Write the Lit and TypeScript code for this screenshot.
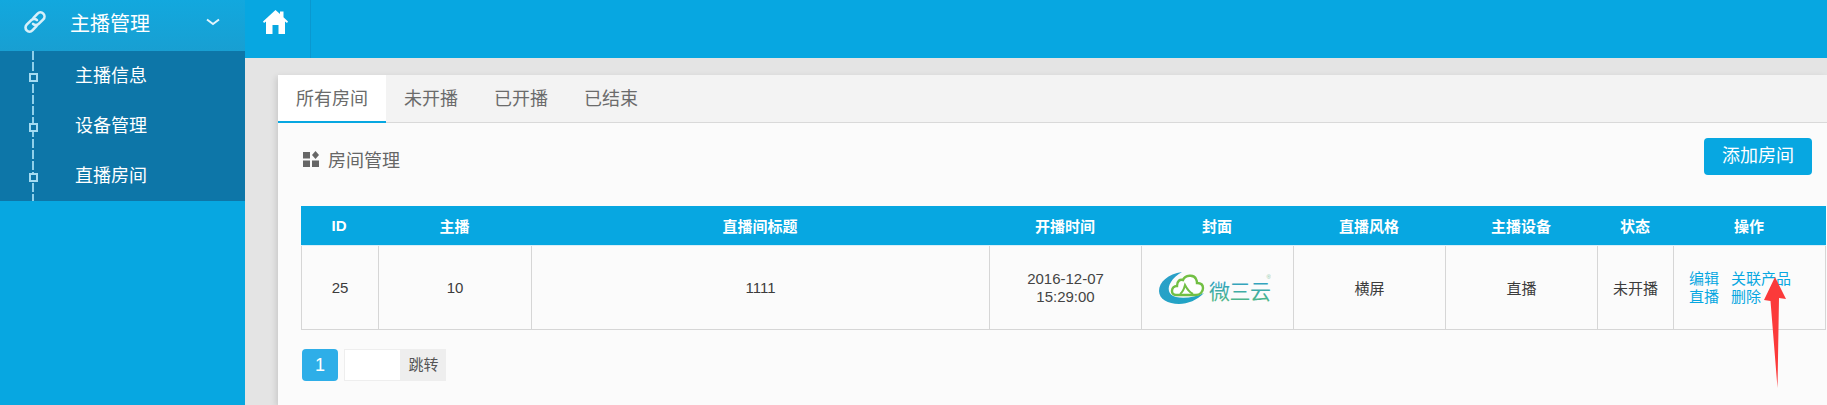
import { LitElement, html, css, svg } from "lit";
import { customElement } from "lit/decorators.js";

const FONT = css`"Liberation Sans", "Noto Sans CJK SC", sans-serif`;

@customElement("app-root")
export class AppRoot extends LitElement {
  static styles = css`
    :host {
      display: block;
      position: relative;
      width: 1827px;
      height: 405px;
      overflow: hidden;
      background: #e4e4e4;
      font-family: ${FONT};
    }
    .layout { display: grid; grid-template-columns: 245px 1fr; height: 405px; }
    .side { background: #07a7e1; }
    .menu-head {
      height: 51px;
      display: flex;
      align-items: center;
      background: linear-gradient(#12a8de, #189fd2);
      color: #fff;
      font-size: 20px;
      box-sizing: border-box;
      padding: 0 0 7px 23px;
    }
    .menu-head .link { width: 24px; height: 24px; margin-right: 23px; }
    .menu-head .chev { width: 14px; height: 8px; margin-left: 56px; }
    .sub { background: #0d76a8; height: 150px; position: relative; }
    .sub::before {
      content: "";
      position: absolute;
      left: 32px;
      top: 0;
      bottom: 0;
      width: 2px;
      background: repeating-linear-gradient(#8fd0ea 0 9px, transparent 9px 11px);
    }
    .sub-item {
      height: 50px;
      display: flex;
      align-items: center;
      padding: 0 0 4px 75px;
      box-sizing: border-box;
      color: #fff;
      font-size: 18px;
      position: relative;
    }
    .sub-item::before {
      content: "";
      position: absolute;
      left: 29px;
      top: 22px;
      width: 5px;
      height: 5px;
      border: 2px solid #a5dcf2;
      background: #0d76a8;
    }
    .top { height: 58px; background: #07a7e1; display: flex; }
    .home {
      width: 66px;
      box-sizing: border-box;
      border-right: 1px solid #0a98cf;
      padding: 10px 0 0 18px;
    }
    .home svg { width: 25px; height: 24px; display: block; }
    .content { padding: 17px 0 0 33px; }
    .card {
      background: #fbfbfb;
      height: 330px;
      box-shadow: -2px 2px 6px rgba(0, 0, 0, 0.12);
    }
    .tabs {
      display: flex;
      height: 48px;
      box-sizing: border-box;
      background: #f3f3f3;
      border-bottom: 1px solid #d9d9d9;
    }
    .tab {
      padding: 0 18px;
      height: 48px;
      box-sizing: border-box;
      line-height: 48px;
      font-size: 18px;
      color: #6b6b6b;
    }
    .tab.on { background: #fff; border-bottom: 2px solid #07a7e1; }
    .body { padding: 15px 1px 0 23px; }
    .head-row { display: flex; justify-content: space-between; height: 68px; padding-right: 14px; }
    .title {
      display: flex;
      align-items: center;
      gap: 9px;
      height: 42px;
      margin-left: 2px;
      font-size: 18px;
      color: #666;
    }
    .title svg { width: 16px; height: 16px; }
    .add {
      width: 108px;
      height: 37px;
      border-radius: 4px;
      background: #07a7e1;
      color: #fff;
      font-size: 18px;
      line-height: 37px;
      text-align: center;
    }
    .grid {
      display: grid;
      grid-template-columns: 78px 153px 458px 152px 152px 152px 152px 76px 152px;
      width: 1525px;
    }
    .th {
      height: 40px;
      background: #07a7e1;
      color: #fff;
      font-weight: 700;
      font-size: 15px;
      display: flex;
      align-items: center;
      justify-content: center;
      border-bottom: 1px solid #d8eef8;
      padding-right: 2px;
      box-sizing: border-box;
    }
    .td {
      height: 84px;
      box-sizing: border-box;
      border-right: 1px solid #d6d6d6;
      border-bottom: 1px solid #d6d6d6;
      display: flex;
      align-items: center;
      justify-content: center;
      text-align: center;
      font-size: 15px;
      color: #3c3c3c;
    }
    .td.first { border-left: 1px solid #d6d6d6; }
    .td.start { justify-content: flex-start; padding-left: 15px; }
    .td .date { font-size: 15px; line-height: 18px; color: #444; }
    .ops {
      display: grid;
      grid-template-columns: auto auto;
      column-gap: 12px;
      line-height: 18px;
      color: #07a7e1;
      text-align: left;
    }
    .logo { width: 112px; height: 34px; display: block; margin-right: 6px; }
    .logo text { font-family: ${FONT}; }
    .pager { display: flex; margin-top: 19px; margin-left: 1px; }
    .cur {
      width: 36px;
      height: 32px;
      background: #2eaee8;
      color: #fff;
      border-radius: 4px;
      font-size: 18px;
      line-height: 32px;
      text-align: center;
      margin-right: 6px;
    }
    .input {
      width: 57px;
      height: 32px;
      box-sizing: border-box;
      background: #fff;
      border: 1px solid #eee;
    }
    .go {
      width: 45px;
      height: 32px;
      background: #eee;
      color: #555;
      font-size: 15px;
      line-height: 32px;
      text-align: center;
    }
    .arrow { position: absolute; left: 0; top: 0; width: 1827px; height: 405px; pointer-events: none; }
  `;

  render() {
    const heads = ["ID", "主播", "直播间标题", "开播时间", "封面", "直播风格", "主播设备", "状态", "操作"];
    return html`
      <div class="layout">
        <aside class="side">
          <div class="menu-head">
            <svg class="link" viewBox="0 0 24 24" fill="none" stroke="#d6f0fa" stroke-width="2.6" stroke-linecap="round">
              <path d="M10.5 7.8 14.6 3.6a4 4 0 0 1 5.7 5.7l-4.6 4.6a4 4 0 0 1-5.7 0" />
              <path d="M13.5 16.2 9.4 20.4a4 4 0 0 1-5.7-5.7l4.6-4.6a4 4 0 0 1 5.7 0" />
            </svg>
            <span>主播管理</span>
            <svg class="chev" viewBox="0 0 14 8" fill="none" stroke="#e4f5fc" stroke-width="2">
              <path d="M1 1.5 7 6l6-4.5" />
            </svg>
          </div>
          <div class="sub">
            <div class="sub-item">主播信息</div>
            <div class="sub-item">设备管理</div>
            <div class="sub-item">直播房间</div>
          </div>
        </aside>
        <main>
          <div class="top">
            <div class="home">
              <svg viewBox="0 0 25 24" fill="#fff">
                <path d="M12.5 0 17 4V1.5h3.5V7.3L25 11.5l-1 1.5-2-1.6V24h-6.5v-9h-6v9H3V11.4L1 13 0 11.5z" />
              </svg>
            </div>
          </div>
          <div class="content">
            <div class="card">
              <div class="tabs">
                <div class="tab on">所有房间</div>
                <div class="tab">未开播</div>
                <div class="tab">已开播</div>
                <div class="tab">已结束</div>
              </div>
              <div class="body">
                <div class="head-row">
                  <div class="title">
                    <svg viewBox="0 0 16 16" fill="#666">
                      <rect x="0" y="1" width="7" height="6.5" />
                      <rect x="0" y="9.5" width="7" height="6.5" />
                      <rect x="9" y="9.5" width="7" height="6.5" />
                      <path d="M12.5 0 16 4l-3.5 4L9 4z" />
                    </svg>
                    <span>房间管理</span>
                  </div>
                  <div class="add">添加房间</div>
                </div>
                <div class="grid">
                  ${heads.map((h) => html`<div class="th">${h}</div>`)}
                  <div class="td first">25</div>
                  <div class="td">10</div>
                  <div class="td">1111</div>
                  <div class="td"><div class="date">2016-12-07<br />15:29:00</div></div>
                  <div class="td">${this.logo()}</div>
                  <div class="td">横屏</div>
                  <div class="td">直播</div>
                  <div class="td">未开播</div>
                  <div class="td start">
                    <div class="ops">
                      <span>编辑</span><span>关联产品</span>
                      <span>直播</span><span>删除</span>
                    </div>
                  </div>
                </div>
                <div class="pager">
                  <div class="cur">1</div>
                  <div class="input"></div>
                  <div class="go">跳转</div>
                </div>
              </div>
            </div>
          </div>
        </main>
      </div>
      <svg class="arrow" viewBox="0 0 1827 405">
        <path d="M1775 277 1786 299 1779 298 1777.5 388 1770.5 301 1764 300z" fill="#fb3a3a" />
      </svg>
    `;
  }

  logo() {
    return svg`<svg class="logo" viewBox="0 0 112 34">
      <defs>
        <linearGradient id="sw" x1="0" x2="1" y1="0" y2="1">
          <stop offset="0" stop-color="#2c9fc9" />
          <stop offset="1" stop-color="#1fa5c4" />
        </linearGradient>
        <linearGradient id="lg" x1="0" x2="0" y1="0" y2="1">
          <stop offset="0" stop-color="#2d9fc8" />
          <stop offset="1" stop-color="#52b983" />
        </linearGradient>
      </defs>
      <path d="M23 1C9 3 0 11 0 20c0 8 9 13 20 13 9 0 18-4 25-11-8 4-20 6-28 4C9 24 8 17 12 11 14 7 18 4 23 1z" fill="url(#sw)" />
      <path d="M17 24c-3 0-4-2-4-4 0-3 2-5 5-5 0-5 3-7 6-6 2-5 11-6 13-1 1 2 1 3 1 4 4 0 6 2 6 5 0 4-3 7-7 7z" fill="#fff" stroke="#72bf44" stroke-width="2.4" />
      <path d="M21 23c3-2 4-5 5-9 2 4 4 7 8 9" fill="none" stroke="#72bf44" stroke-width="2" />
      <text x="50" y="28" font-size="21" textLength="62" fill="url(#lg)">微三云</text>
      <text x="112" y="8" font-size="6" text-anchor="end" fill="#8cc8a8">®</text>
    </svg>`;
  }
}
